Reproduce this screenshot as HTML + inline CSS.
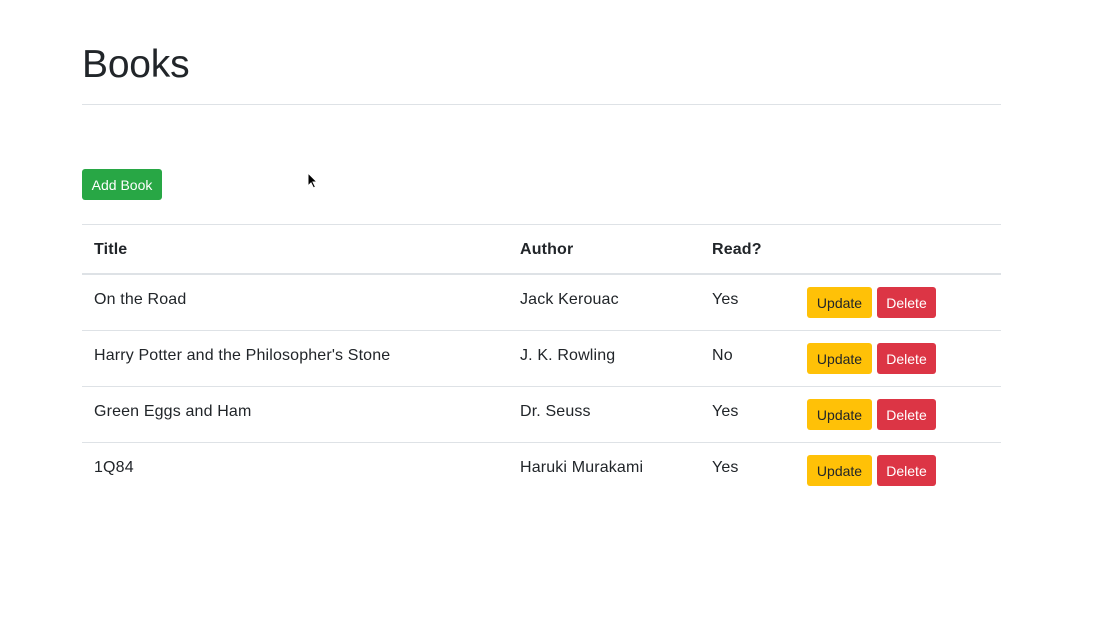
<!DOCTYPE html><html><head><style>
body{margin:0;width:1102px;height:624px;background:#fff;font-family:"Liberation Sans",sans-serif;color:#212529;position:relative;overflow:hidden}
.a{position:absolute;white-space:nowrap}
h1{position:absolute;left:82px;top:40px;margin:0;font-size:39px;font-weight:400;line-height:50px;letter-spacing:-0.2px}
.hr{position:absolute;left:82px;width:919px;height:1px;background:#dee2e6}
.t{font-size:16px;line-height:20px;letter-spacing:0.15px}
.b{position:absolute;border-radius:3px;font-size:14px;text-align:center;line-height:33px;height:31px}
.u{background:#ffc107;color:#212529;width:65px;left:807px}
.d{background:#dc3545;color:#fff;width:59px;left:877px}
</style></head><body>
<h1>Books</h1>
<div class="hr" style="top:104px"></div>
<div class="b" style="left:82px;top:169px;width:80px;background:#28a745;color:#fff">Add Book</div>
<svg class="a" style="left:307px;top:172px" width="12" height="18" viewBox="0 0 12 18"><path d="M1 1 L1 14 L4 11 L6.5 16 L8.5 15 L6 10 L10 10 Z" fill="#000" stroke="#fff" stroke-width="1"/></svg>
<div class="hr" style="top:224px"></div>
<div class="a t" style="left:94px;top:240px;font-weight:700">Title</div>
<div class="a t" style="left:520px;top:240px;font-weight:700">Author</div>
<div class="a t" style="left:712px;top:240px;font-weight:700">Read?</div>
<div class="hr" style="top:273px;height:2px"></div>

<div class="a t" style="left:94px;top:290px">On the Road</div>
<div class="a t" style="left:520px;top:290px">Jack Kerouac</div>
<div class="a t" style="left:712px;top:290px">Yes</div>
<div class="b u" style="top:287px">Update</div><div class="b d" style="top:287px">Delete</div>
<div class="hr" style="top:330px"></div>

<div class="a t" style="left:94px;top:346px">Harry Potter and the Philosopher's Stone</div>
<div class="a t" style="left:520px;top:346px">J. K. Rowling</div>
<div class="a t" style="left:712px;top:346px">No</div>
<div class="b u" style="top:343px">Update</div><div class="b d" style="top:343px">Delete</div>
<div class="hr" style="top:386px"></div>

<div class="a t" style="left:94px;top:402px">Green Eggs and Ham</div>
<div class="a t" style="left:520px;top:402px">Dr. Seuss</div>
<div class="a t" style="left:712px;top:402px">Yes</div>
<div class="b u" style="top:399px">Update</div><div class="b d" style="top:399px">Delete</div>
<div class="hr" style="top:442px"></div>

<div class="a t" style="left:94px;top:458px">1Q84</div>
<div class="a t" style="left:520px;top:458px">Haruki Murakami</div>
<div class="a t" style="left:712px;top:458px">Yes</div>
<div class="b u" style="top:455px">Update</div><div class="b d" style="top:455px">Delete</div>
</body></html>
